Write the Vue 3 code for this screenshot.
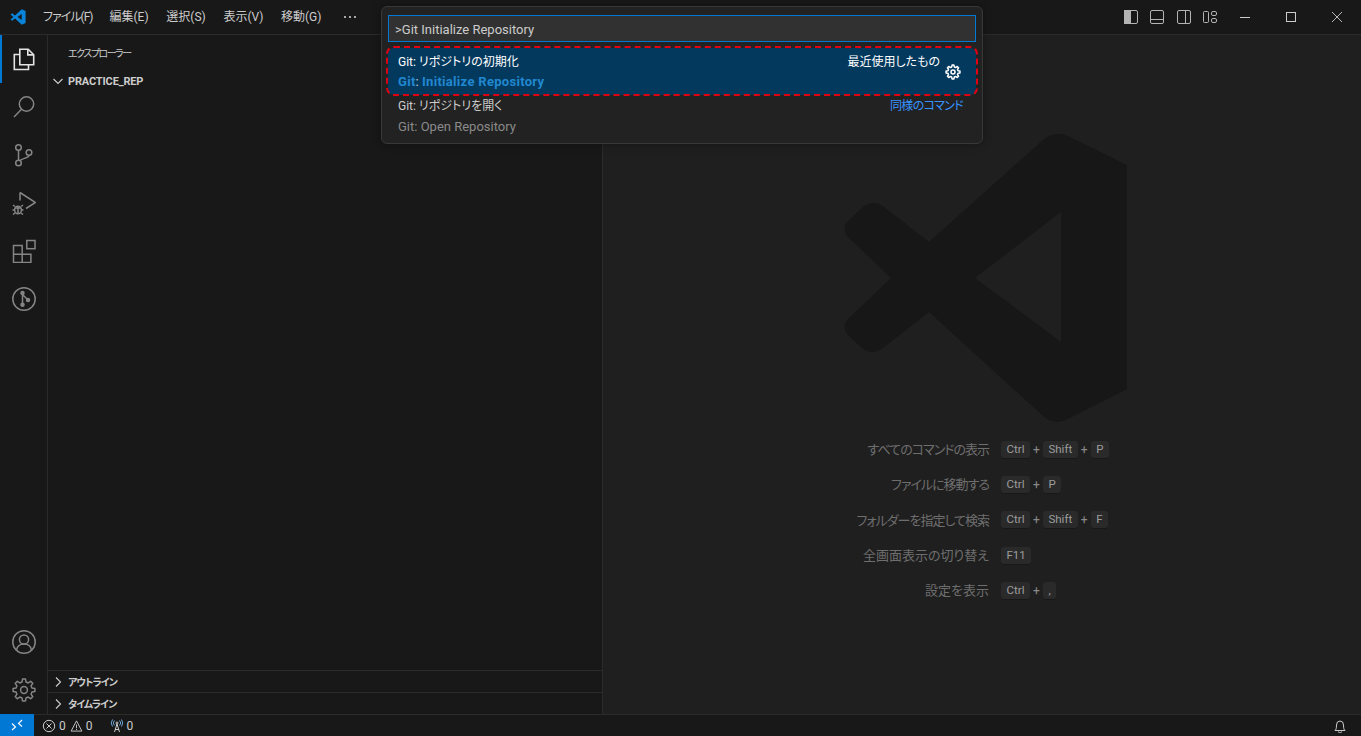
<script setup>
const menus = [
  { text: 'ファイル(F)', tight: true },
  { text: '編集(E)', tight: false },
  { text: '選択(S)', tight: false },
  { text: '表示(V)', tight: false },
  { text: '移動(G)', tight: false }
]

function gear(cx, cy, ro, ri, teeth) {
  const pts = []
  const step = (Math.PI * 2) / teeth
  for (let i = 0; i < teeth; i++) {
    const a = i * step - Math.PI / 2
    const seq = [
      [ri, a - step * 0.32],
      [ro, a - step * 0.17],
      [ro, a + step * 0.17],
      [ri, a + step * 0.32]
    ]
    for (const [r, t] of seq) {
      pts.push((cx + r * Math.cos(t)).toFixed(2) + ' ' + (cy + r * Math.sin(t)).toFixed(2))
    }
  }
  return 'M' + pts.join('L') + 'Z'
}
const gearBig = gear(12, 12, 11, 8.2, 8)
const gearSmall = gear(8, 8, 7, 5.2, 8)

const shortcuts = [
  { label: 'すべてのコマンドの表示', keys: ['Ctrl', 'Shift', 'P'], tight: true },
  { label: 'ファイルに移動する', keys: ['Ctrl', 'P'], tight: true },
  { label: 'フォルダーを指定して検索', keys: ['Ctrl', 'Shift', 'F'], tight: true },
  { label: '全画面表示の切り替え', keys: ['F11'], tight: false },
  { label: '設定を表示', keys: ['Ctrl', ','], tight: false }
]
</script>

<template>
  <div class="app">
    <header class="titlebar">
      <svg class="logo" width="16" height="16" viewBox="0 0 16 16">
        <path fill="#0a84d8" d="M15.6 2v12l-3.8 1.8L5 9.6l-2.9 2.2L.5 10.5 3.4 8 .5 5.5l1.6-1.3L5 6.4 11.8.2zM11.7 4.9 7.6 8l4.1 3.1z" fill-rule="evenodd"/>
      </svg>
      <nav class="menu">
        <span v-for="m in menus" :key="m.text" class="menu-item" :class="{ tight: m.tight }">{{ m.text }}</span>
        <span class="menu-item more">
          <svg width="14" height="4" viewBox="0 0 14 4"><g fill="#ccc"><circle cx="2" cy="2" r="1.1"/><circle cx="7" cy="2" r="1.1"/><circle cx="12" cy="2" r="1.1"/></g></svg>
        </span>
      </nav>
      <div class="title-right">
        <div class="layout-icons">
          <svg width="16" height="16" viewBox="0 0 16 16" fill="none" stroke="#b4b4b4"><rect x="1.5" y="1.5" width="13" height="13" rx="1.5"/><rect x="1.5" y="1.5" width="6" height="13" fill="#b4b4b4"/></svg>
          <svg width="16" height="16" viewBox="0 0 16 16" fill="none" stroke="#b4b4b4"><rect x="1.5" y="1.5" width="13" height="13" rx="1.5"/><path d="M1.5 10.5h13"/></svg>
          <svg width="16" height="16" viewBox="0 0 16 16" fill="none" stroke="#b4b4b4"><rect x="1.5" y="1.5" width="13" height="13" rx="1.5"/><path d="M9.5 1.5v13"/></svg>
          <svg width="16" height="16" viewBox="0 0 16 16" fill="none" stroke="#b4b4b4"><rect x="1.5" y="2.5" width="5" height="11" rx="1"/><rect x="9.5" y="2.5" width="5" height="4" rx="1.5"/><rect x="9.5" y="9.5" width="5" height="4" rx="1.5"/></svg>
        </div>
        <div class="win-btn"><svg width="10" height="10" viewBox="0 0 10 10"><path d="M0 5.5h10" stroke="#ccc"/></svg></div>
        <div class="win-btn"><svg width="10" height="10" viewBox="0 0 10 10"><rect x=".5" y=".5" width="9" height="9" fill="none" stroke="#ccc"/></svg></div>
        <div class="win-btn"><svg width="10" height="10" viewBox="0 0 10 10"><path d="M0 0l10 10M10 0 0 10" stroke="#ccc" stroke-width=".9"/></svg></div>
      </div>
    </header>

    <div class="main">
      <aside class="activity">
        <div class="act-group">
          <div class="act-item active">
            <svg width="24" height="24" viewBox="0 0 24 24" fill="none" stroke="#e4e4e4" stroke-width="1.6"><path d="M7.8 2.3h8.400l5.500 5.500v9.900H7.800z"/><path d="M15.800 2.500v5.400h5.700"/><path d="M7.800 7.500H2.300v15h14.200v-4.800"/></svg>
          </div>
          <div class="act-item">
            <svg width="24" height="24" viewBox="0 0 24 24" fill="none" stroke="#858585" stroke-width="1.5"><circle cx="14.5" cy="9" r="7.2"/><path d="M9.5 14.3 2 22"/></svg>
          </div>
          <div class="act-item">
            <svg width="24" height="24" viewBox="0 0 24 24" fill="none" stroke="#858585" stroke-width="1.5"><circle cx="6.5" cy="4.5" r="2.8"/><circle cx="17" cy="9.5" r="2.8"/><circle cx="6.5" cy="20" r="2.8"/><path d="M6.500 7.300v9.900M17 12.300c0 3.400-7.300 2.600-8.900 5.200"/></svg>
          </div>
          <div class="act-item">
            <svg width="24" height="24" viewBox="0 0 24 24" fill="none" stroke="#858585" stroke-width="1.5"><path d="M8 1.500v8M8 1.500 23.500 11.500 14 17.500"/><ellipse cx="6" cy="19" rx="3.400" ry="3.800"/><path d="M2.500 19H.5M11.500 19h-2M3 15.500l-2-1.500M9 15.500l2-1.500M3 22l-2 1.500M9 22l2 1.500M3 17h6M6 16v6"/></svg>
          </div>
          <div class="act-item">
            <svg width="24" height="24" viewBox="0 0 24 24" fill="none" stroke="#858585" stroke-width="1.5"><path d="M1.5 6.500h8.700v8.700h8.700v8.300H1.500zM1.500 15.200h8.700v8.300"/><rect x="14.800" y="1.500" width="8.200" height="8.200"/></svg>
          </div>
          <div class="act-item">
            <svg width="24" height="24" viewBox="0 0 24 24" fill="none" stroke="#858585" stroke-width="1.5"><circle cx="12" cy="12" r="11.2"/><path d="M10.500 6v12M11 8l5 5"/><g fill="#858585"><circle cx="10.500" cy="6" r="1.500"/><circle cx="10.500" cy="17.800" r="1.500"/><circle cx="16" cy="13" r="1.500"/></g></svg>
          </div>
        </div>
        <div class="act-group">
          <div class="act-item">
            <svg width="24" height="24" viewBox="0 0 24 24" fill="none" stroke="#858585" stroke-width="1.5"><circle cx="12" cy="12" r="11.2"/><circle cx="12" cy="9.500" r="4.600"/><path d="M4.500 20c.8-4 3.800-6 7.500-6s6.700 2 7.500 6"/></svg>
          </div>
          <div class="act-item">
            <svg width="24" height="24" viewBox="0 0 24 24" fill="none" stroke="#858585" stroke-width="1.5" stroke-linejoin="round"><path :d="gearBig"/><circle cx="12" cy="12" r="3.400"/></svg>
          </div>
        </div>
      </aside>

      <aside class="sidebar">
        <div class="side-title">エクスプローラー</div>
        <div class="section">
          <svg class="chev" width="12" height="12" viewBox="0 0 12 12"><path d="M1.500 4 6 8.500 10.500 4" fill="none" stroke="#ccc" stroke-width="1.100"/></svg>
          <span class="latin">PRACTICE_REP</span>
        </div>
        <div class="side-fill"></div>
        <div class="section bordered">
          <svg class="chev" width="12" height="12" viewBox="0 0 12 12"><path d="M4 1.500 8.500 6 4 10.500" fill="none" stroke="#ccc" stroke-width="1.100"/></svg>
          <span class="kana">アウトライン</span>
        </div>
        <div class="section bordered">
          <svg class="chev" width="12" height="12" viewBox="0 0 12 12"><path d="M4 1.500 8.500 6 4 10.500" fill="none" stroke="#ccc" stroke-width="1.100"/></svg>
          <span class="kana">タイムライン</span>
        </div>
      </aside>

      <main class="editor">
        <svg class="watermark" width="290" height="296" viewBox="840 130 290 296">
          <path fill="#171717" fill-rule="evenodd" d="M1127 166 1068 137Q1055 131 1043 141L929 243 883 207Q872 200 862 209L848 222Q841 229 848 238L891 279 848 320Q841 328 848 336L862 349Q872 357 883 349L929 313 1043 417Q1055 427 1068 420L1127 390ZM1061 213V343L975 279Z"/>
        </svg>
        <div class="shortcuts">
          <template v-for="s in shortcuts" :key="s.label">
            <div class="sc-label" :class="{ tight: s.tight }">{{ s.label }}</div>
            <div class="sc-keys">
              <template v-for="(k, i) in s.keys" :key="k">
                <span v-if="i" class="plus">+</span>
                <kbd class="key">{{ k }}</kbd>
              </template>
            </div>
          </template>
        </div>
      </main>
    </div>

    <footer class="status">
      <div class="remote">
        <svg width="12" height="12" viewBox="0 0 12 12" fill="none" stroke="#fff" stroke-width="1.100"><path d="M1 4.500 4.500 8 1 11M11 1 7.500 4.500 11 7.500"/></svg>
      </div>
      <div class="st-item first">
        <svg width="14" height="14" viewBox="0 0 14 14" fill="none" stroke="#ccc"><circle cx="7" cy="7" r="5.700"/><path d="m4.500 4.500 5 5m0-5-5 5"/></svg>
        <span>0</span>
        <svg class="warn" width="13" height="14" viewBox="0 0 14 14" fill="none" stroke="#ccc"><path d="M7 1.500 12.800 12.500H1.200zM7 5.500v4M7 10.300v1"/></svg>
        <span>0</span>
      </div>
      <div class="st-item radio">
        <svg width="14" height="14" viewBox="0 0 14 14" fill="none" stroke="#ccc"><path d="M4.500 13 7 5l2.500 8M5 10.500h4"/><circle cx="7" cy="4" r="1"/><path d="M4.500 1.500a3.500 3.500 0 0 0 0 5M9.500 1.500a3.500 3.500 0 0 1 0 5M2.500.5a6 6 0 0 0 0 7M11.500.5a6 6 0 0 1 0 7" stroke="#6ea6d8"/></svg>
        <span>0</span>
      </div>
      <div class="st-bell">
        <svg width="14" height="14" viewBox="0 0 14 14" fill="none" stroke="#ccc"><path d="M2 11.500c1-1 1.500-2 1.500-5.500a3.500 4 0 0 1 7 0c0 3.500.5 4.500 1.500 5.500zM5.500 12.500a1.500 1.500 0 0 0 3 0"/></svg>
      </div>
    </footer>

    <div class="quick">
      <div class="qi-input">&gt;Git Initialize Repository</div>
      <div class="qi-row selected">
        <div class="qi-line">
          <span class="qi-main">Git: リポジトリの初期化</span>
          <span class="qi-recent">最近使用したもの</span>
        </div>
        <div class="qi-sub"><b>Git</b>: <b>Initialize Repository</b></div>
        <svg class="qi-gear" width="16" height="16" viewBox="0 0 16 16" fill="none" stroke="#fff" stroke-width="1.500" stroke-linejoin="round"><path :d="gearSmall"/><circle cx="8" cy="8" r="2"/></svg>
        <div class="annot"></div>
      </div>
      <div class="qi-row">
        <div class="qi-line">
          <span class="qi-main">Git: リポジトリを開く</span>
          <span class="qi-similar">同様のコマンド</span>
        </div>
        <div class="qi-sub plain">Git: Open Repository</div>
      </div>
    </div>
  </div>
</template>

<style>
html, body { margin: 0; background: #181818; }
</style>

<style scoped>
.app {
  position: relative;
  width: 1361px;
  height: 736px;
  overflow: hidden;
  display: flex;
  flex-direction: column;
  background: #181818;
  color: #ccc;
  font-family: Roboto, "Noto Sans CJK JP", sans-serif;
  font-feature-settings: "palt";
  font-size: 12px;
}
.titlebar {
  height: 34px;
  flex: none;
  display: flex;
  align-items: center;
  border-bottom: 1px solid #2b2b2b;
  padding-left: 10px;
}
.logo { flex: none; }
.menu { display: flex; margin-left: 9px; }
.menu-item { padding: 0 8px; line-height: 24px; white-space: nowrap; margin-right: 1.700px; }
.menu-item.tight { letter-spacing: -1px; margin-right: 1px; }
.more { display: flex; align-items: center; padding: 0 9px 0 12px; }
.title-right { margin-left: auto; display: flex; align-items: center; height: 100%; padding-right: 1px; }
.layout-icons { display: flex; gap: 10.500px; margin-right: 4px; }
.win-btn { width: 46px; height: 34px; display: flex; align-items: center; justify-content: center; }
.main { flex: 1; min-height: 0; display: flex; }
.activity {
  width: 47px;
  flex: none;
  border-right: 1px solid #2b2b2b;
  display: flex;
  flex-direction: column;
  justify-content: space-between;
}
.act-item {
  position: relative;
  height: 48px;
  display: flex;
  align-items: center;
  justify-content: center;
}
.act-item.active::before {
  content: "";
  position: absolute;
  left: 0;
  top: 0;
  bottom: 0;
  width: 2px;
  background: #0078d4;
}
.sidebar {
  width: 554px;
  flex: none;
  border-right: 1px solid #2b2b2b;
  display: flex;
  flex-direction: column;
}
.side-title {
  height: 35px;
  line-height: 37px;
  padding-left: 20px;
  font-size: 10px;
  letter-spacing: -1.500px;
  color: #ccc;
}
.section {
  height: 22px;
  flex: none;
  box-sizing: border-box;
  display: flex;
  align-items: center;
  padding-left: 3px;
  font-size: 11px;
  font-weight: 700;
  color: #ccc;
}
.section .latin { letter-spacing: -.15px; }
.section .kana { font-size: 10px; letter-spacing: -.9px; }
.section.bordered { border-top: 1px solid #2b2b2b; }
.chev { margin-right: 4px; margin-left: 1px; }
.side-fill { flex: 1; }
.editor { flex: 1; min-width: 0; background: #1f1f1f; display: flex; flex-direction: column; }
.watermark { display: block; margin: 94px 0 0 237px; }
.shortcuts {
  margin-top: 7px;
  display: grid;
  grid-template-columns: 386px 1fr;
  column-gap: 12px;
  grid-auto-rows: 35.300px;
  align-items: center;
}
.sc-label { text-align: right; color: #6e6e6e; font-size: 13px; padding-bottom: 2px; }
.sc-label.tight { letter-spacing: -1px; }
.sc-keys { display: flex; align-items: center; gap: 2px; }
.plus { color: #8a8a8a; width: 9px; text-align: center; font-size: 12px; }
.key {
  font-family: inherit;
  font-size: 11.500px;
  line-height: 17px;
  padding: 0 5.500px 1px;
  text-align: center;
  color: #9d9d9d;
  background: #2a2a2a;
  border-radius: 3px;
  box-shadow: inset 0 -1px 0 #181818;
}
.status {
  height: 22px;
  flex: none;
  box-sizing: border-box;
  border-top: 1px solid #2b2b2b;
  display: flex;
  align-items: center;
  font-size: 12px;
}
.remote {
  width: 34px;
  height: 22px;
  margin-top: -1px;
  background: #0078d4;
  display: flex;
  align-items: center;
  justify-content: center;
}
.st-item { display: flex; align-items: center; gap: 3px; }
.first { margin-left: 8px; }
.warn { margin-left: 1px; }
.radio { margin-left: 17px; }
.st-bell { margin-left: auto; margin-right: 14px; display: flex; }
.quick {
  position: absolute;
  left: 381px;
  top: 6px;
  width: 602px;
  height: 138px;
  box-sizing: border-box;
  background: #222;
  border: 1px solid #383838;
  border-radius: 6px;
  box-shadow: 0 0 8px rgba(0, 0, 0, .36);
  padding: 8px 6px 0;
  font-size: 13px;
}
.qi-input {
  height: 27px;
  box-sizing: border-box;
  background: #313131;
  border: 1px solid #0078d4;
  padding-left: 6px;
  line-height: 27px;
  color: #ccc;
}
.qi-row {
  position: relative;
  box-sizing: border-box;
  height: 42px;
  padding: 1px 13px 0 10px;
}
.qi-row.selected { height: 47px; margin-top: 6px; padding-top: 4px; background: #04395e; border-radius: 6px; }
.qi-line { display: flex; justify-content: space-between; height: 21px; line-height: 21px; font-size: 12px; }
.qi-main { color: #ccc; }
.selected .qi-main, .qi-recent { color: #fff; }
.qi-recent { margin-right: 23px; }
.qi-similar { color: #3794ff; letter-spacing: -.7px; }
.qi-sub { height: 20px; line-height: 20px; margin-top: 0; color: #2aaaff; font-size: 13px; }
.selected .qi-sub { color: #ccd; margin-top: -1px; }
.selected .qi-sub b { color: #2188d0; font-weight: 700; letter-spacing: .3px; }
.qi-sub.plain { color: #8a8a8a; }
.qi-gear { position: absolute; left: 557px; top: 16px; }
.annot {
  position: absolute;
  inset: -2px -2px -1px -2px;
  border: 2px dashed #e00012;
  border-radius: 8px;
  pointer-events: none;
}
</style>
